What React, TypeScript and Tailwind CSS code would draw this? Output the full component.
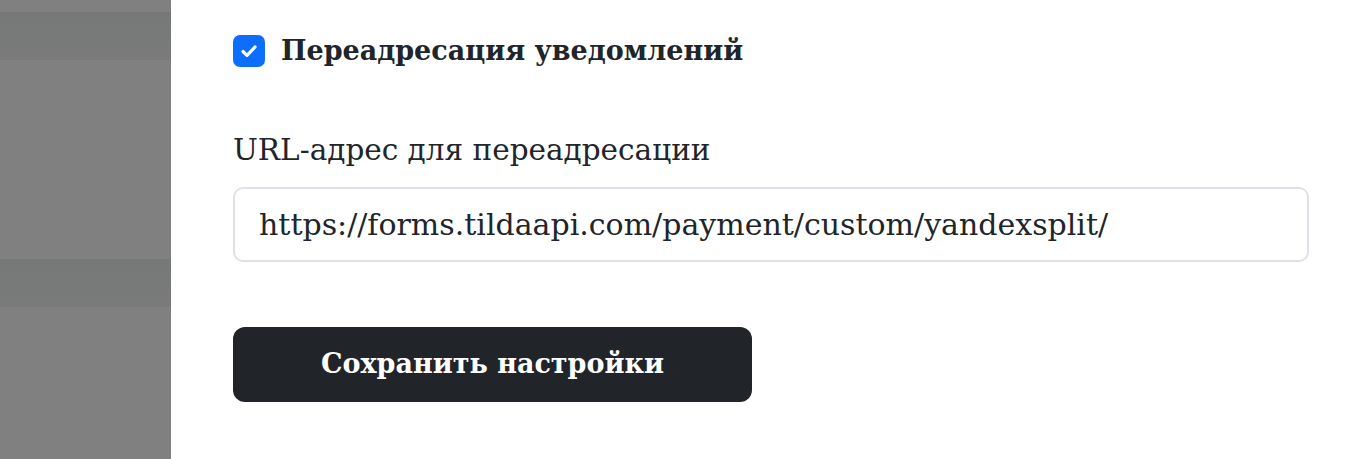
import React from 'react';

const serif = { fontFamily: '"DejaVu Serif", "Liberation Serif", serif' };

function Backdrop() {
  return (
    <div className="w-[171px] shrink-0 bg-[#808080] flex flex-col">
      <div className="h-[12px]" />
      <div className="h-[48px] bg-gradient-to-b from-[#767878] to-[#7a7a7a]" />
      <div className="h-[199px]" />
      <div className="h-[48px] bg-gradient-to-b from-[#767878] to-[#7a7a7a]" />
    </div>
  );
}

export default function App() {
  const [forward, setForward] = React.useState(true);
  const [url, setUrl] = React.useState('https://forms.tildaapi.com/payment/custom/yandexsplit/');

  return (
    <div className="flex h-[459px] w-[1366px] overflow-hidden bg-white text-[#212529]" style={serif}>
      <Backdrop />
      <div className="flex-1 pl-[62px] pr-[57px] pt-[35px]">
        <label className="flex items-center gap-[16px] cursor-pointer">
          <span
            onClick={() => setForward(!forward)}
            className={`flex h-[32px] w-[32px] shrink-0 items-center justify-center rounded-[7px] ${forward ? 'bg-[#0d6efd]' : 'border-2 border-[#dee2e6] bg-white'}`}
          >
            {forward && (
              <svg width="20" height="20" viewBox="0 0 20 20" fill="none">
                <path d="M4 10.5l4 3.8L16 6" stroke="white" strokeWidth="3.2" strokeLinecap="round" strokeLinejoin="round" />
              </svg>
            )}
          </span>
          <span className="text-[27px] font-bold leading-[32px]">Переадресация уведомлений</span>
        </label>

        <div className="mt-[67px] text-[29.5px] leading-[32px]">URL-адрес для переадресации</div>

        <input
          value={url}
          onChange={(e) => setUrl(e.target.value)}
          className="mt-[21px] block h-[75px] w-full rounded-[10px] border-2 border-[#dee2e6] px-[24px] text-[30px] text-[#212529] outline-none"
          style={serif}
        />

        <button
          className="mt-[65px] flex h-[75px] w-[519px] items-center justify-center rounded-[12px] bg-[#212529] text-[27px] font-bold text-white"
          style={serif}
        >
          Сохранить настройки
        </button>
      </div>
    </div>
  );
}
